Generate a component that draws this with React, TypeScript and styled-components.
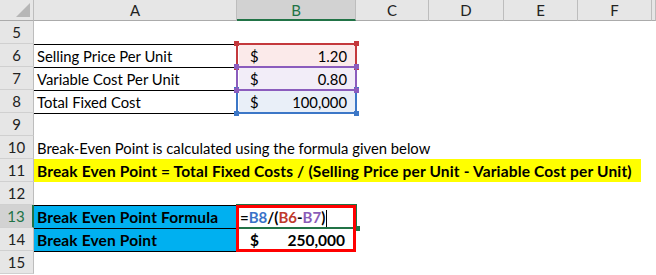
import React from "react";
import styled, { createGlobalStyle } from "styled-components";

const GlobalStyle = createGlobalStyle`
  html, body {
    margin: 0;
    padding: 0;
    background: #ffffff;
  }
`;

const FONT = `Lato, "Liberation Sans", sans-serif`;

const tones = {
  red: { line: "#c4393d", fill: "#fbeaea", ink: "#c0392b" },
  purple: { line: "#8b5cbd", fill: "#f2edf8", ink: "#8a5cb8" },
  blue: { line: "#3c77c7", fill: "#e9eff8", ink: "#3a72c8" },
};
type Tone = keyof typeof tones;

const Sheet = styled.div`
  display: grid;
  grid-template-columns: 34px 203px 119px 73px 75px 74px 74px 4px;
  grid-template-rows: 21px repeat(11, 23px);
  width: 656px;
  height: 275px;
  overflow: hidden;
  font-family: ${FONT};
  font-size: 14.8px;
  color: #000;
`;

const Corner = styled.div`
  grid-row: 1;
  grid-column: 1;
  background: #e6e6e6;
  border-right: 1px solid #bdbdbd;
  border-bottom: 1px solid #ababab;
  display: flex;
  align-items: flex-end;
  justify-content: flex-end;
  padding: 0 3px 3px 0;
  box-sizing: border-box;
`;

const CornerTriangle = styled.div`
  width: 14px;
  height: 14px;
  background: #b6b6b6;
  clip-path: polygon(100% 0, 100% 100%, 0 100%);
`;

const ColHead = styled.div<{ $col: number; $active?: boolean }>`
  grid-row: 1;
  grid-column: ${(p) => p.$col};
  box-sizing: border-box;
  background: ${(p) => (p.$active ? "#d2d2d2" : "#e6e6e6")};
  border-right: 1px solid #bdbdbd;
  border-bottom: ${(p) => (p.$active ? "2px solid #217346" : "1px solid #ababab")};
  color: ${(p) => (p.$active ? "#217346" : "#222")};
  display: flex;
  align-items: center;
  justify-content: center;
  font-size: 15px;
  padding-top: ${(p) => (p.$active ? "1px" : "0")};
`;

const RowHead = styled.div<{ $row: number; $active?: boolean }>`
  grid-row: ${(p) => p.$row};
  grid-column: 1;
  box-sizing: border-box;
  background: ${(p) => (p.$active ? "#d2d2d2" : "#e6e6e6")};
  border-right: ${(p) => (p.$active ? "2px solid #217346" : "1px solid #bdbdbd")};
  border-bottom: 1px solid #d0d0d0;
  color: ${(p) => (p.$active ? "#217346" : "#222")};
  display: flex;
  align-items: center;
  justify-content: center;
  font-size: 15px;
`;

const Cell = styled.div<{
  $row: number;
  $col: number;
  $span?: number;
  $fill?: string;
  $bold?: boolean;
  $rule?: boolean;
}>`
  grid-row: ${(p) => p.$row};
  grid-column: ${(p) => p.$col} / span ${(p) => p.$span ?? 1};
  box-sizing: border-box;
  background: ${(p) => p.$fill ?? "transparent"};
  border-top: ${(p) => (p.$rule ? "1px solid #000" : "none")};
  font-weight: ${(p) => (p.$bold ? 700 : 400)};
  font-size: ${(p) => (p.$bold ? "15.5px" : "14.8px")};
  letter-spacing: ${(p) => (p.$bold ? "0.15px" : "0")};
  display: flex;
  align-items: flex-end;
  padding: 0 0 2px 3px;
  white-space: nowrap;
  min-width: 0;
`;

const Highlight = styled.div`
  align-self: stretch;
  width: 604px;
  margin-left: -3px;
  padding-left: 3px;
  background: #ffff00;
  display: flex;
  align-items: flex-end;
  padding-bottom: 2px;
  margin-bottom: -2px;
`;

const Money = styled.div<{ $fill?: string; $bold?: boolean; $row: number }>`
  grid-row: ${(p) => p.$row};
  grid-column: 3;
  box-sizing: border-box;
  background: ${(p) => p.$fill ?? "transparent"};
  font-weight: ${(p) => (p.$bold ? 700 : 400)};
  font-size: ${(p) => (p.$bold ? "15.5px" : "14.8px")};
  display: flex;
  align-items: flex-end;
  justify-content: space-between;
  padding: 0 ${(p) => (p.$bold ? 10 : 8)}px 2px 11px;
  margin: 1px 1px 0 2px;
`;

const Formula = styled.div`
  grid-row: 10;
  grid-column: 3;
  font-weight: 700;
  font-size: 15px;
  display: flex;
  align-items: flex-end;
  padding: 0 0 2px 3px;
  white-space: nowrap;
`;

const Ref = styled.span<{ $tone: Tone }>`
  color: ${(p) => tones[p.$tone].ink};
`;

const Caret = styled.span`
  display: inline-block;
  width: 0;
  height: 17px;
  border-left: 1px solid #000;
  margin-left: 1px;
  margin-bottom: -1px;
`;

const RangeFrame = styled.div<{ $row: number; $tone: Tone; $z: number }>`
  grid-row: ${(p) => p.$row};
  grid-column: 3;
  margin: -1px;
  border: 2px solid ${(p) => tones[p.$tone].line};
  position: relative;
  z-index: ${(p) => p.$z};
  pointer-events: none;
`;

const Handle = styled.span<{ $tone: Tone; $x: "left" | "right"; $y: "top" | "bottom" }>`
  position: absolute;
  width: 5px;
  height: 5px;
  background: ${(p) => tones[p.$tone].line};
  ${(p) => p.$x}: -4px;
  ${(p) => p.$y}: -4px;
`;

const ActiveFrame = styled.div`
  grid-row: 10;
  grid-column: 3;
  margin: -1px;
  border: 2px solid #217346;
  position: relative;
  z-index: 4;
`;

const FillHandle = styled.span`
  position: absolute;
  right: -5px;
  bottom: -4px;
  width: 5px;
  height: 5px;
  background: #217346;
  border-left: 1px solid #fff;
`;

const Annotation = styled.div`
  grid-row: 10 / span 2;
  grid-column: 3;
  margin: 0 0 -1px -1px;
  border: 3px solid #ff0000;
  z-index: 5;
  pointer-events: none;
`;

const colLetters = ["A", "B", "C", "D", "E", "F"];
const rowNumbers = [5, 6, 7, 8, 9, 10, 11, 12, 13, 14, 15];
const gridRow = (n: number) => n - 3;

const inputs: { row: number; label: string; value: string; tone: Tone; z: number }[] = [
  { row: 6, label: "Selling Price Per Unit", value: "1.20", tone: "red", z: 1 },
  { row: 7, label: "Variable Cost Per Unit", value: "0.80", tone: "purple", z: 3 },
  { row: 8, label: "Total Fixed Cost", value: "100,000", tone: "blue", z: 2 },
];

const SpreadsheetView = () => (
  <Sheet>
    <Corner>
      <CornerTriangle />
    </Corner>
    {colLetters.map((c, i) => (
      <ColHead key={c} $col={i + 2} $active={c === "B"}>
        {c}
      </ColHead>
    ))}
    <ColHead $col={8} />
    {rowNumbers.map((n) => (
      <RowHead key={n} $row={gridRow(n)} $active={n === 13}>
        {n}
      </RowHead>
    ))}

    {inputs.map(({ row, label, value, tone, z }) => (
      <React.Fragment key={row}>
        <Cell $row={gridRow(row)} $col={2} $rule>
          {label}
        </Cell>
        <Money $row={gridRow(row)} $fill={tones[tone].fill}>
          <span>$</span>
          <span>{value}</span>
        </Money>
        <RangeFrame $row={gridRow(row)} $tone={tone} $z={z}>
          <Handle $tone={tone} $x="left" $y="top" />
          <Handle $tone={tone} $x="right" $y="top" />
          <Handle $tone={tone} $x="left" $y="bottom" />
          <Handle $tone={tone} $x="right" $y="bottom" />
        </RangeFrame>
      </React.Fragment>
    ))}
    <Cell $row={gridRow(9)} $col={2} $rule />

    <Cell $row={gridRow(10)} $col={2} $span={6}>
      Break-Even Point is calculated using the formula given below
    </Cell>
    <Cell $row={gridRow(11)} $col={2} $span={6} $bold>
      <Highlight>
        Break Even Point = Total Fixed Costs / (Selling Price per Unit - Variable Cost per Unit)
      </Highlight>
    </Cell>

    <Cell $row={gridRow(13)} $col={2} $fill="#00b0f0" $bold $rule>
      Break Even Point Formula
    </Cell>
    <Cell $row={gridRow(14)} $col={2} $fill="#00b0f0" $bold $rule>
      Break Even Point
    </Cell>
    <Cell $row={gridRow(15)} $col={2} $rule />

    <Formula>
      =<Ref $tone="blue">B8</Ref>/(<Ref $tone="red">B6</Ref>-<Ref $tone="purple">B7</Ref>)
      <Caret />
    </Formula>
    <ActiveFrame>
      <FillHandle />
    </ActiveFrame>
    <Money $row={gridRow(14)} $bold>
      <span>$</span>
      <span>250,000</span>
    </Money>
    <Annotation />
  </Sheet>
);

export default function App() {
  return (
    <>
      <GlobalStyle />
      <SpreadsheetView />
    </>
  );
}
